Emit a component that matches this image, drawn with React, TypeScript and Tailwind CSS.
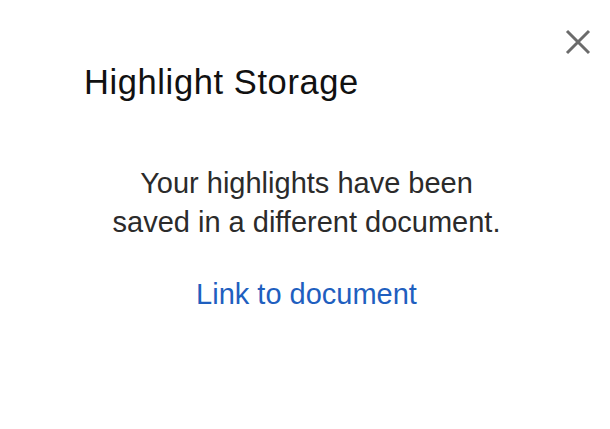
//highlight storage dialog
export default function App() {
  return (
    <main className="relative w-[610px] h-[429px] bg-white font-['Liberation_Sans',Arial,sans-serif]">
      {/* close button in the corner */}
      <button className="absolute right-[18px] top-[28px] w-[28px] h-[28px] flex items-center justify-center text-[#6b6b6b]">
        <svg width="26" height="26" viewBox="0 0 26 26" fill="none" stroke="currentColor" strokeWidth="3">
          <path d="M2 2 L24 24 M24 2 L2 24" />
        </svg>
      </button>

      <div className="flex flex-col pt-[60px]">
        {/* Title */}
        <h1 className="pl-[84px] text-[34.5px] leading-[44px] text-[#111] tracking-[0.6px]">
          Highlight Storage
        </h1>

        {/* Message */}
        <p className="mt-[60px] text-center text-[29px] leading-[39px] text-[#2b2b2b] pl-[3px]">
          Your highlights have been
          <br />
          saved in a different document.
        </p>

        {/* Link */}
        <a href="#" className="mt-[33px] self-center pl-[3px] text-[29px] leading-[39px] text-[#1f5fbf]">
          Link to document
        </a>
      </div>
    </main>
  );
}
